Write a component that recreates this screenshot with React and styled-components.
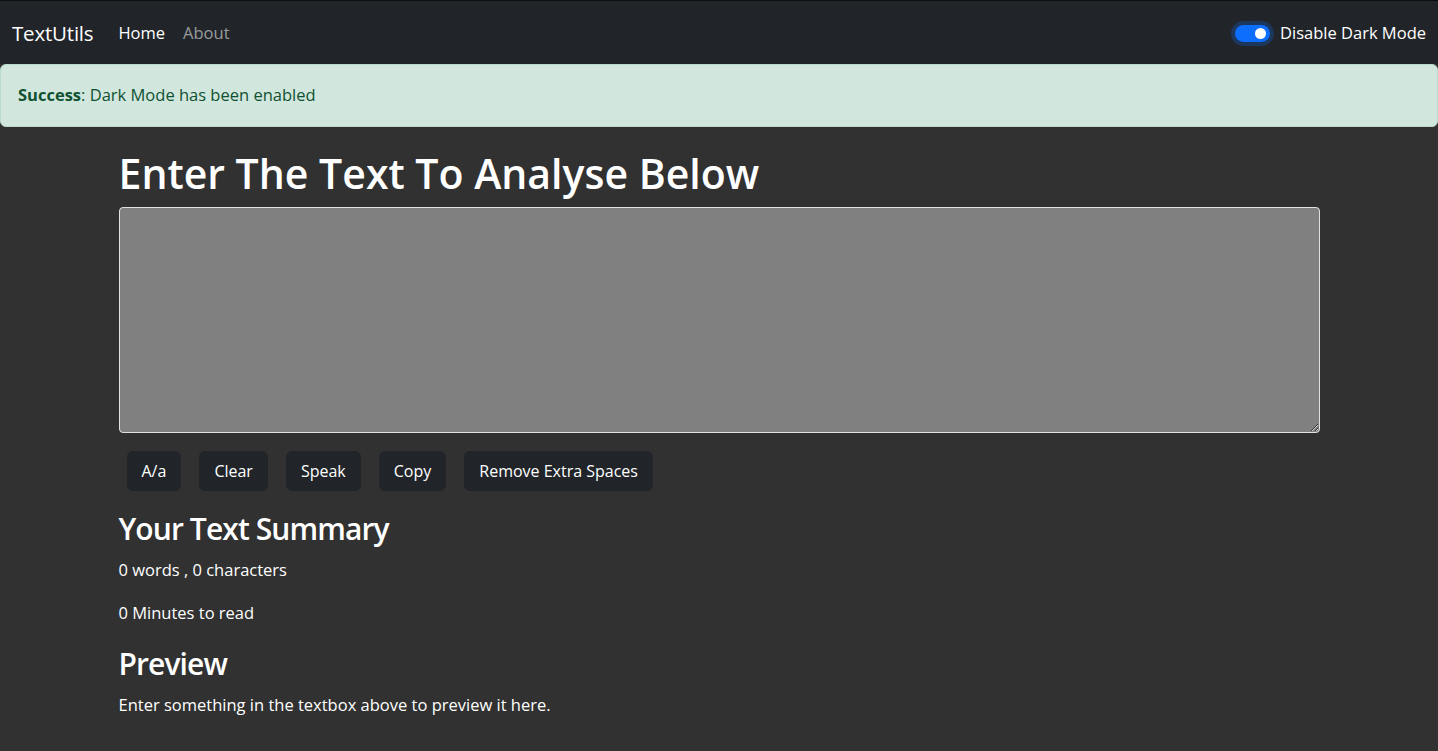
import React, { useState } from 'react';
import styled, { createGlobalStyle } from 'styled-components';

const GlobalStyle = createGlobalStyle`
  * { box-sizing: border-box; }
  body {
    margin: 0;
    background: #313131;
    color: #fff;
    font-family: 'Open Sans', 'Noto Sans', sans-serif;
    font-size: 16.5px;
    line-height: 1.5;
  }
`;

const Navbar = styled.nav`
  display: flex;
  align-items: center;
  justify-content: space-between;
  height: 64px;
  padding: 2px 12px 0;
  background: #212529;
  border-top: 1px solid #0c0d0f;
`;

const Left = styled.div`
  display: flex;
  align-items: center;
`;

const Brand = styled.a`
  font-size: 20.5px;
  color: #fff;
  text-decoration: none;
  margin-right: 25px;
  letter-spacing: -0.2px;
`;

const NavLink = styled.a`
  color: ${p => (p.$active ? '#fff' : 'rgba(255, 255, 255, 0.55)')};
  text-decoration: none;
  padding: 8px 0;
  margin-right: 18px;
`;

const SwitchWrap = styled.label`
  display: flex;
  align-items: center;
  gap: 10px;
  color: #fff;
`;

const Switch = styled.span`
  position: relative;
  width: 35px;
  height: 17px;
  border-radius: 9px;
  background: #0d6efd;
  box-shadow: 0 0 0 4px rgba(13, 110, 253, 0.25);
  &::after {
    content: '';
    position: absolute;
    right: 4px;
    top: 3px;
    width: 11px;
    height: 11px;
    border-radius: 50%;
    background: #fff;
  }
`;

const Alert = styled.div`
  height: 63px;
  display: flex;
  align-items: center;
  padding: 0 17px;
  background: #d1e7dd;
  color: #0f5132;
  border: 1px solid #badbcc;
  border-radius: 6px;
  strong { font-weight: 700; }
`;

const Container = styled.main`
  max-width: 1201px;
  margin: 0 auto;
  padding-top: 22px;
`;

const Title = styled.h1`
  margin: 0 0 9px;
  font-size: 41px;
  font-weight: 600;
  line-height: 1.2;
`;

const TextArea = styled.textarea`
  display: block;
  width: 100%;
  height: 226px;
  background: #808080;
  color: #fff;
  border: 1px solid #dee2e6;
  border-radius: 4px;
  padding: 6px 12px;
  font: inherit;
  resize: vertical;
  outline: none;
`;

const Buttons = styled.div`
  display: flex;
  gap: 18px;
  padding: 18px 8px 0;
`;

const Button = styled.button`
  height: 40px;
  padding: 0 14px;
  background: #212529;
  color: #fff;
  border: 1px solid #212529;
  border-radius: 6px;
  font: inherit;
  font-size: 16px;
  cursor: pointer;
`;

const SubTitle = styled.h2`
  margin: 20px 0 11px;
  font-size: 30px;
  font-weight: 600;
  letter-spacing: -0.9px;
  line-height: 1.2;
`;

const Para = styled.p`
  margin: 0 0 18px;
`;

export default function App() {
  const [text, setText] = useState('');
  const words = text.split(/\s+/).filter(w => w.length).length;
  return (
    <>
      <GlobalStyle />
      <Navbar>
        <Left>
          <Brand href="#">TextUtils</Brand>
          <NavLink $active href="#">Home</NavLink>
          <NavLink href="#">About</NavLink>
        </Left>
        <SwitchWrap>
          <Switch />
          Disable Dark Mode
        </SwitchWrap>
      </Navbar>
      <Alert>
        <span><strong>Success</strong>: Dark Mode has been enabled</span>
      </Alert>
      <Container>
        <Title>Enter The Text To Analyse Below</Title>
        <TextArea value={text} onChange={e => setText(e.target.value)} />
        <Buttons>
          <Button>A/a</Button>
          <Button>Clear</Button>
          <Button>Speak</Button>
          <Button>Copy</Button>
          <Button>Remove Extra Spaces</Button>
        </Buttons>
        <SubTitle>Your Text Summary</SubTitle>
        <Para>{words} words , {text.length} characters</Para>
        <Para>{0.008 * words} Minutes to read</Para>
        <SubTitle>Preview</SubTitle>
        <Para>{text.length ? text : 'Enter something in the textbox above to preview it here.'}</Para>
      </Container>
    </>
  );
}
